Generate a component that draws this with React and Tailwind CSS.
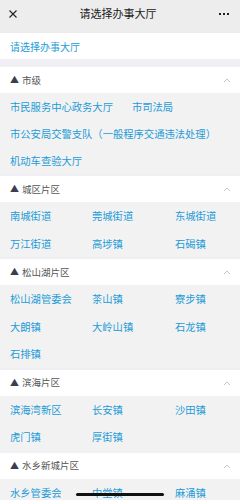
import React from "react";

const sections = [
    {
        title: "市级",
        flow: true,
        items: ["市民服务中心政务大厅", "市司法局", "市公安局交警支队（一般程序交通违法处理）", "机动车查验大厅"]
    },
    { title: "城区片区", items: ["南城街道", "莞城街道", "东城街道", "万江街道", "高埗镇", "石碣镇"] },
    { title: "松山湖片区", items: ["松山湖管委会", "茶山镇", "寮步镇", "大朗镇", "大岭山镇", "石龙镇", "石排镇"] },
    { title: "滨海片区", items: ["滨海湾新区", "长安镇", "沙田镇", "虎门镇", "厚街镇"] },
    { title: "水乡新城片区", items: ["水乡管委会", "中堂镇", "麻涌镇"] }
];

const Chevron = () => (
    <svg width="8" height="6" viewBox="0 0 8 6" className="text-[#c8c8c8]">
        <polyline points="1,5 4,2 7,5" fill="none" stroke="currentColor" strokeWidth="1" />
    </svg>
);

const App = () => {
    return (
        <div className="w-[240px] h-[500px] overflow-hidden relative bg-[#efeff4] font-['Noto_Sans_CJK_SC','Noto_Sans',sans-serif]">
            {/* top bar */}
            <div className="h-[33px] bg-[#ededed] flex items-center justify-between px-[9px] pb-[6px]">
                <svg width="8" height="8" viewBox="0 0 8 8">
                    <path d="M0.5 0.5L7.5 7.5M7.5 0.5L0.5 7.5" stroke="#222" strokeWidth="1.1" />
                </svg>
                <span className="text-[11px] text-[#1b1b1b]">请选择办事大厅</span>
                <div className="flex gap-[2px] pr-[2px]">
                    <span className="w-[2px] h-[2px] bg-[#222]" />
                    <span className="w-[2px] h-[2px] bg-[#222]" />
                    <span className="w-[2px] h-[2px] bg-[#222]" />
                </div>
            </div>

            <div className="h-[26px] bg-white flex items-center px-[10px] text-[10px] text-[#1e9bd7]">
                请选择办事大厅
            </div>

            <div className="mt-[8px] flex flex-col gap-[2px]">
                {sections.map((s) => (
                    <div key={s.title}>
                        <div className="h-[26px] bg-white flex items-center justify-between pl-[10px] pr-[9px]">
                            <div className="flex items-center gap-[3px] text-[9.5px] text-[#555]">
                                <span className="text-[9px] text-[#3b3e52]">▲</span>
                                <span>{s.title}</span>
                            </div>
                            <Chevron />
                        </div>
                        {s.flow ? (
                            <div className="bg-[#f2f2f2] flex flex-wrap gap-x-[19px] pl-[10px]">
                                {s.items.map((it) => (
                                    <span key={it} className="h-[27px] flex items-center text-[10.3px] text-[#1e9bd7]">{it}</span>
                                ))}
                            </div>
                        ) : (
                            <div className="bg-[#f2f2f2] grid grid-cols-[82px_83px_75px] pl-[10px]">
                                {s.items.map((it) => (
                                    <span key={it} className="h-[27.5px] flex items-center text-[10.3px] text-[#1e9bd7]">{it}</span>
                                ))}
                            </div>
                        )}
                    </div>
                ))}
            </div>

            {/* home indicator */}
            <div className="absolute left-[76px] bottom-[4px] w-[88px] h-[3px] rounded-full bg-[#111]" />
        </div>
    );
};

export default App;
